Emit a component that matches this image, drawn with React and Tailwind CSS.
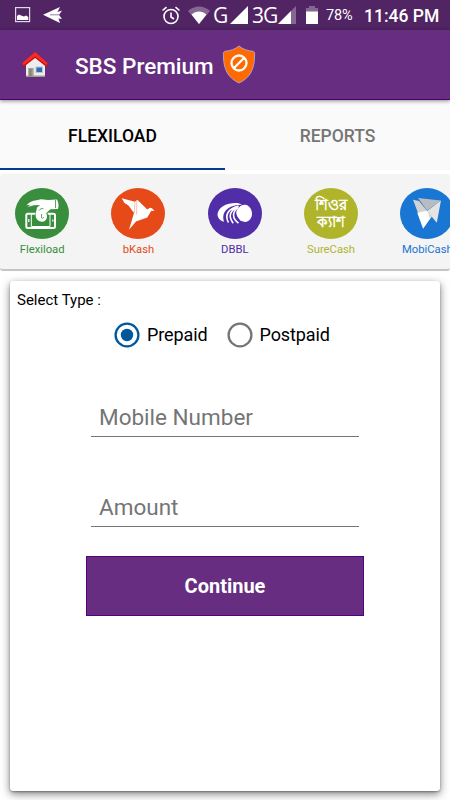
import React, { useState } from "react";

const FlexiloadIcon = () => (
  <svg viewBox="0 0 54 51" className="h-[51px] w-[54px]">
    <ellipse cx="27" cy="25.5" rx="27" ry="25.5" fill="#388e3c" />
    <rect x="11.300" y="25.700" width="28.700" height="14.200" rx="1.500" fill="none" stroke="#fff" strokeWidth="2" />
    <path d="M13.800 31v3M37.800 31.500v2" stroke="#fff" strokeWidth="1.200" />
    <path d="M16.300 26v12.500h18.700V26" fill="none" stroke="#fff" strokeWidth="1" />
    <circle cx="26.500" cy="28" r="6.800" fill="#388e3c" />
    <path
      d="M11.500 17.200c2.500-3 6-4.600 10-5l4.500-1 7 .9 9-.6c1.600 2.700 2 6.200 1 9.500l-7.500.2-4.300 3.700c1.700 3.500.8 7.500-2.700 8.600-3.800 1-7.500-1.700-7.800-5.500-.2-3 .8-5.500 1.300-8.500l3-2.500-6 .3-6.500 1.700 3-2.300z"
      fill="#fff"
    />
    <path
      d="M24 22.500c1-1.600 2.800-2.300 4.500-1.800M26.500 26v3.500c.2 1.200 2 1 2-.3M40.500 12v8"
      fill="none"
      stroke="#388e3c"
      strokeWidth=".8"
    />
  </svg>
);

const BkashIcon = () => (
  <svg viewBox="0 0 54 51" className="h-[51px] w-[54px]">
    <ellipse cx="27" cy="25.500" rx="27" ry="25.500" fill="#e64a19" />
    <path
      d="M10.700 10.300L24 13.800L26.300 11.700L36.300 21.500L39 19.800L41 20.200L43.500 23L40.300 22.800L36.300 29.500L25 33.500L18 41.700L23 25L17.500 17.500L13.500 15Z"
      fill="#fff"
    />
    <path d="M24 13.800L23.300 25M25.800 12.500l-.2 14" fill="none" stroke="#e64a19" strokeWidth=".35" />
  </svg>
);

const DbblIcon = () => (
  <svg viewBox="0 0 54 51" className="h-[51px] w-[54px]">
    <ellipse cx="27" cy="25.500" rx="27" ry="25.500" fill="#512da8" />
    <path
      d="M16 33.700C11.500 32.500 9 29 9.600 25.500 10.800 19 19 15 27 15c3 0 5.500.5 7 1.700-8-.2-15 2.800-17.500 7.500-1.600 3-1.600 6.300-.5 9.500z"
      fill="#fff"
    />
    <path
      d="M20.500 34.500c-4-7-1-13.500 10-16.500M25.200 35.200c-5.500-7-3.200-13 5.500-16.700M30.500 35.200c-6.500-5-6.500-11-.5-15.500"
      fill="none"
      stroke="#fff"
      strokeWidth="1.600"
    />
    <path d="M31 19.500c1.500-2 4-3 6.500-2.700 3.500.5 6.500 4.500 6.500 9 0 4.700-3 8-7 8.300l-4.500-1.300c-2.500-2.800-4.500-6-4.300-8.500.3-2 1.300-3.500 2.800-4.800z" fill="#fff" />
  </svg>
);

const SureCashIcon = () => (
  <span className="flex h-[51px] w-[54px] flex-col items-center justify-center rounded-[50%] bg-[#afb42b] text-[15px] leading-[17px] font-bold whitespace-nowrap text-white">
    <span>শিওর</span>
    <span>ক্যাশ</span>
  </span>
);

const MobiCashIcon = () => (
  <svg viewBox="0 0 54 51" className="h-[51px] w-[54px]">
    <ellipse cx="27" cy="25.500" rx="27" ry="25.500" fill="#1976d2" />
    <path d="M13 11.700L18 25L28 24L19 13z" fill="#d2d2d2" />
    <path d="M18 10L41 12.600L27 22.500z" fill="#b8bbbf" />
    <path d="M41 12.600L27 23L36.800 34.800z" fill="#e4e4e4" />
    <path d="M17.200 24.700L27 22.700L31.600 28.700L23.100 40.700z" fill="#fff" />
    <path d="M28 23l4 6-2.500 1z" fill="#d4d4d4" />
  </svg>
);

const services = [
  { name: "Flexiload", icon: FlexiloadIcon, color: "text-[#388e3c]" },
  { name: "bKash", icon: BkashIcon, color: "text-[#e64a19]" },
  { name: "DBBL", icon: DbblIcon, color: "text-[#512da8]" },
  { name: "SureCash", icon: SureCashIcon, color: "text-[#afb42b]" },
  { name: "MobiCash", icon: MobiCashIcon, color: "text-[#1976d2]" },
];

const StatusBar = () => (
  <div className="flex h-[30px] items-center bg-[#512464] text-white">
    <svg viewBox="0 0 16 16" className="ml-[15px] h-4 w-4 shrink-0">
      <rect x=".6" y=".6" width="14" height="14" fill="none" stroke="#e0d8e4" strokeWidth="1.200" />
      <path d="M2 13V9l2-1.500 2 1 3 1 2-1 2.300 1.500v3z" fill="#fff" />
    </svg>
    <svg viewBox="0 0 20 16" className="ml-[12px] h-4 w-5 shrink-0">
      <path d="M0 7.700L17 0L14.500 5L19 3.500L16 8L19 12L15.500 11.500L17 16z" fill="#fff" />
      <path d="M7 7.800h9" stroke="#512464" strokeWidth=".6" />
    </svg>
    <svg viewBox="0 0 18 19" className="ml-[99px] h-[19px] w-[18px] shrink-0" fill="none" stroke="#fff" strokeWidth="1.600">
      <circle cx="9" cy="10.500" r="7" />
      <path d="M.5 4.500l4-3.300M17.500 4.500l-4-3.300M9 6.500V11l3 2" />
    </svg>
    <svg viewBox="0 0 22 18" className="ml-[8px] h-[18px] w-[22px] shrink-0">
      <path d="M0 5C6-1 16-1 22 5L11 18z" fill="#866693" />
      <path d="M3.500 8.500c4.500-4 10.500-4 15 0L11 18z" fill="#fff" />
    </svg>
    <span className="ml-[3px] w-[17px] font-['Open_Sans',sans-serif] text-[21px] leading-[30px]">G</span>
    <svg viewBox="0 0 18 18" className="h-[18px] w-[18px] shrink-0">
      <path d="M0 18L18 0v18z" fill="#fff" />
    </svg>
    <span className="ml-[4px] w-[26px] font-['Open_Sans',sans-serif] text-[21px] leading-[30px] tracking-[-1px]">3G</span>
    <svg viewBox="0 0 18 18" className="h-[18px] w-[18px] shrink-0">
      <path d="M0 18L18 0v18z" fill="#866693" />
      <path d="M0 18L13 5v13z" fill="#fff" />
    </svg>
    <svg viewBox="0 0 12 18" className="ml-[10px] h-[18px] w-3 shrink-0">
      <path d="M0 2h3V0h6v2h3v4H0z" fill="#866693" />
      <path d="M0 5.500h12V18H0z" fill="#fff" />
    </svg>
    <span className="ml-[8px] w-[38px] pt-px text-[14.500px] tracking-[-0.200px]">78%</span>
    <span className="pt-[2px] text-[17.500px] font-medium whitespace-nowrap">11:46 PM</span>
  </div>
);

const Header = () => (
  <header className="relative z-10 flex h-[70px] items-center border-b border-[#4b006e] bg-[#662d80] shadow-[0_1px_4px_rgba(0,0,0,0.45)]">
    <svg viewBox="0 0 27 26" className="mt-px ml-[22px] h-[26px] w-[27px]">
      <path d="M4 12l9.500-8L23 12v12.500H4z" fill="#ededed" />
      <path d="M4 23.500h19v1.500H4z" fill="#9b9b95" />
      <path d="M13.200 0L26 11.500l-1.500 3.500-11.300-9L1.500 15 0 11.500z" fill="#c9120f" />
      <path d="M13.200 0L25.500 11l-1 2.200L13.200 4.300 1.500 13.200.3 11z" fill="#f92b22" />
      <path d="M6.200 16h5.500v8.500H6.200z" fill="#a3a398" />
      <path d="M7.200 17h2.500v7.500H7.200z" fill="#85857a" />
      <circle cx="10" cy="20.500" r=".6" fill="#e2b000" />
      <rect x="14" y="15" width="6.500" height="5.500" fill="#2f6fb2" stroke="#bcc7d1" />
    </svg>
    <h1 className="mt-[4px] ml-[26px] w-[139px] text-[22.500px] font-medium whitespace-nowrap text-white">SBS Premium</h1>
    <svg viewBox="0 0 34 39" className="-mt-px ml-[8px] h-[39px] w-[34px]">
      <path
        d="M17 1c4 3.500 9 4.800 14.500 5.400C33 7 32.700 9 32.500 12c-.3 13-5 21-15.500 26C6.500 33 1.800 25 1.500 12 1.300 9 1 7 2.500 6.400 8 5.800 13 4.500 17 1z"
        fill="#ff6a00"
        stroke="#b7a0c4"
        strokeWidth="1"
      />
      <g fill="none" stroke="#fff" strokeWidth="2.300">
        <circle cx="17" cy="18" r="7.500" />
        <path d="M11.700 23.300L22.300 12.700" />
      </g>
    </svg>
  </header>
);

const RadioOption = ({ label, checked, onSelect }) => (
  <button type="button" onClick={onSelect} className="flex items-center gap-[7px] text-[18px] tracking-[-0.100px]">
    <svg viewBox="0 0 26 26" className="h-[26px] w-[26px]">
      <circle cx="13" cy="13" r="11.400" fill="none" stroke={checked ? "#01579b" : "#757575"} strokeWidth="2.300" />
      {checked && <circle cx="13" cy="13" r="6.200" fill="#01579b" />}
    </svg>
    {label}
  </button>
);

const App = () => {
  const [tab, setTab] = useState("FLEXILOAD");
  const [type, setType] = useState("Prepaid");

  return (
    <div className="flex h-[800px] w-[450px] flex-col overflow-hidden bg-white font-[Roboto,sans-serif] text-black">
      <StatusBar />
      <Header />

      <nav className="grid h-[70px] grid-cols-2 bg-[#fafafa] text-[17.500px] font-medium">
        {["FLEXILOAD", "REPORTS"].map((name) => (
          <button
            key={name}
            onClick={() => setTab(name)}
            className={
              tab === name
                ? "border-b-2 border-[#003f8f] pt-[4px] text-black"
                : "border-b-2 border-transparent pt-[4px] text-[#757575]"
            }
          >
            {name}
          </button>
        ))}
      </nav>

      <section className="mt-1 flex h-[97px] shrink-0 gap-[16px] overflow-hidden rounded-[3px] border-b-2 border-[#c4c4c4] bg-[#f4f4f4] pt-[14px] pl-[2px]">
        {services.map(({ name, icon: Icon, color }) => (
          <div key={name} className="flex w-[80.300px] shrink-0 flex-col items-center">
            <Icon />
            <span className={`pt-px text-[11.250px] leading-[20px] ${color}`}>{name}</span>
          </div>
        ))}
      </section>

      <main className="mx-[10px] mt-[10px] flex h-[510px] shrink-0 flex-col rounded-[3px] bg-white shadow-[0_3px_8px_rgba(0,0,0,0.5),0_1px_2px_rgba(0,0,0,0.3)]">
        <p className="mt-[8px] pl-[7px] text-[15px] leading-[22px]">Select Type :</p>
        <div className="mt-[10px] flex gap-[19px] pl-[104px]">
          {["Prepaid", "Postpaid"].map((label) => (
            <RadioOption key={label} label={label} checked={type === label} onSelect={() => setType(label)} />
          ))}
        </div>
        <form className="flex flex-col px-[76px]" onSubmit={(e) => e.preventDefault()}>
          <input
            placeholder="Mobile Number"
            className="mx-[5px] mt-[49px] h-[40px] border-b border-[#757575] px-[8px] pt-px text-[22.500px] outline-none placeholder:text-[#757575]"
          />
          <input
            placeholder="Amount"
            className="mx-[5px] mt-[50px] h-[40px] border-b border-[#757575] px-[8px] pt-px text-[22.500px] outline-none placeholder:text-[#757575]"
          />
          <button type="submit" className="mt-[29px] h-[60px] border border-[#55007c] bg-[#662d80] text-[20px] font-bold text-white">
            Continue
          </button>
        </form>
      </main>
    </div>
  );
};

export default App;
